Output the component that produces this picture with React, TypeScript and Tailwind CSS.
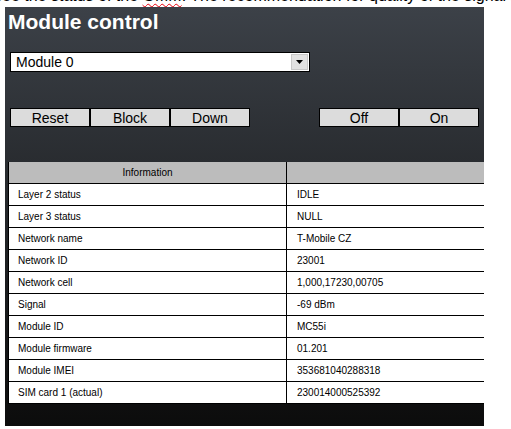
import React from "react";

const rows: [string, string][] = [
  ["Layer 2 status", "IDLE"],
  ["Layer 3 status", "NULL"],
  ["Network name", "T-Mobile CZ"],
  ["Network ID", "23001"],
  ["Network cell", "1,000,17230,00705"],
  ["Signal", "-69 dBm"],
  ["Module ID", "MC55i"],
  ["Module firmware", "01.201"],
  ["Module IMEI", "353681040288318"],
  ["SIM card 1 (actual)", "230014000525392"],
];

function Btn({ label }: { label: string }) {
  return (
    <div className="w-[80px] h-[19px] border border-black bg-[#dcdcdc] flex items-center justify-center text-[14px] leading-none text-black">
      {label}
    </div>
  );
}

export default function App() {
  return (
    <div
      className="w-[511px] h-[429px] bg-white overflow-hidden"
      style={{ fontFamily: '"Liberation Sans", Arial, sans-serif' }}
    >
      <div className="h-[7px] overflow-hidden">
        <div className="whitespace-nowrap text-[16px] leading-[16px] text-black mt-[-12px] ml-[-6px]">
          see the status of the{" "}
          <span className="underline decoration-wavy decoration-red-600 decoration-1 underline-offset-2">GMM</span>. The
          recommendation for quality of the signal is
        </div>
      </div>
      <div className="ml-[5px] w-[479px] h-[419px] bg-linear-to-b from-[#3c4148] to-[#0c0c0c] overflow-hidden flex flex-col">
        <div className="pl-[3px] pt-[4px] text-[21px] leading-[21px] font-bold text-white">
          Module control
        </div>
        <div className="ml-[5px] mt-[20px] w-[300px] h-[20px] border border-black bg-white flex items-center">
          <span className="flex-1 pl-[5px] text-[14px] leading-none text-black">Module 0</span>
          <div className="w-[17px] h-[16px] mr-[1px] bg-[#e1e1e1] border border-[#c8c8c8] flex items-center justify-center">
            <svg width="7" height="4" viewBox="0 0 7 4">
              <polygon points="0,0 7,0 3.5,4" fill="#000" />
            </svg>
          </div>
        </div>
        <div className="mt-[36px] ml-[5px] flex h-[19px]">
          <Btn label="Reset" />
          <Btn label="Block" />
          <Btn label="Down" />
          <div className="w-[69px]" />
          <Btn label="Off" />
          <Btn label="On" />
        </div>
        <div className="mt-[35px] ml-[3px] w-[560px] border-l border-black text-[10px] leading-none text-black">
          <div className="flex h-[22px] bg-[#bcbcbc] border-b border-black">
            <div className="w-[278px] border-r border-black flex items-center justify-center">
              Information
            </div>
            <div className="flex-1" />
          </div>
          {rows.map(([k, v]) => (
            <div key={k} className="flex h-[22px] bg-white border-b border-black">
              <div className="w-[278px] border-r border-black flex items-center pl-[9px] pt-[1px]">
                {k}
              </div>
              <div className="flex-1 flex items-center pl-[10px] pt-[1px]">{v}</div>
            </div>
          ))}
        </div>
      </div>
    </div>
  );
}
